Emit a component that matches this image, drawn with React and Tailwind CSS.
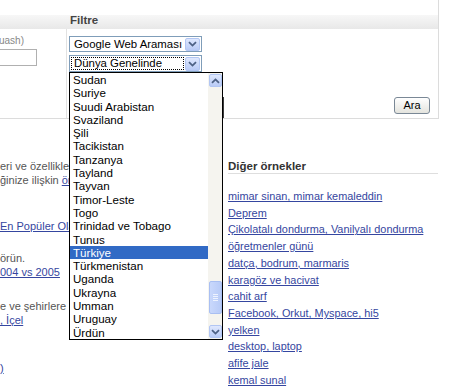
const items = [
  "Sudan",
  "Suriye",
  "Suudi Arabistan",
  "Svaziland",
  "Şili",
  "Tacikistan",
  "Tanzanya",
  "Tayland",
  "Tayvan",
  "Timor-Leste",
  "Togo",
  "Trinidad ve Tobago",
  "Tunus",
  "Türkiye",
  "Türkmenistan",
  "Uganda",
  "Ukrayna",
  "Umman",
  "Uruguay",
  "Ürdün",
];

const links = [
  "mimar sinan, mimar kemaleddin",
  "Deprem",
  "Çikolatalı dondurma, Vanilyalı dondurma",
  "öğretmenler günü",
  "datça, bodrum, marmaris",
  "karagöz ve hacivat",
  "cahit arf",
  "Facebook, Orkut, Myspace, hi5",
  "yelken",
  "desktop, laptop",
  "afife jale",
  "kemal sunal",
];

function Chevron({ down = true }) {
  return (
    <svg width="9" height="6" viewBox="0 0 9 6">
      <path
        d={down ? "M1 1.2 L4.5 4.6 L8 1.2" : "M1 4.8 L4.5 1.4 L8 4.8"}
        fill="none"
        stroke="#4d6185"
        strokeWidth="1.8"
      />
    </svg>
  );
}

function ArrowBtn({ down = true, className = "" }) {
  return (
    <div
      className={
        "flex items-center justify-center rounded-[2px] border border-[#b2c6f3] bg-gradient-to-b from-[#dfe8fe] to-[#b9cbf6] " +
        className
      }
    >
      <Chevron down={down} />
    </div>
  );
}

export default function App() {
  return (
    <div className="relative w-[460px] h-[389px] overflow-hidden bg-white text-[11px] text-[#555] font-['Liberation_Sans',Arial,sans-serif]">
      {/* top panel */}
      <div className="w-[439px] h-[119px] border-r border-b border-[#dcdcdc] flex flex-col">
        <div className="mt-[15px] h-[14px] bg-gradient-to-b from-[#f7f7f7] to-[#e8e8e8] flex items-start">
          <div className="w-[70px]" />
          <span className="font-bold text-[11.5px] leading-[11px] text-[#444]">Filtre</span>
        </div>
        <div className="flex flex-1">
          <div className="w-[67px] border-r border-[#e2e2e2] pt-[6px]">
            <div className="text-[10px] leading-[12px] text-[#888] -ml-[1px]">uash)</div>
            <div className="mt-[2px] w-[37px] h-[17px] border border-[#b0b0b0] border-l-0" />
          </div>
          <div className="flex-1 flex flex-col pl-[2px] pt-[7px] pr-[9px]">
            <div className="w-[133px] h-[16px] border border-[#7f9db9] bg-white flex items-center">
              <span className="flex-1 pl-[4px] text-[11.4px] leading-[14px] text-black">Google Web Araması</span>
              <ArrowBtn className="w-[15px] h-[13px] mr-[1px]" />
            </div>
            <div className="mt-[3px] w-[133px] h-[17px] border border-[#7f9db9] bg-white flex items-center">
              <div className="flex-1 ml-[1px] h-[13px] border border-dotted border-black flex items-center">
                <span className="pl-[2px] text-[11.4px] leading-[13px] text-black">Dünya Genelinde</span>
              </div>
              <ArrowBtn className="w-[15px] h-[14px] mx-[1px]" />
            </div>
            <div className="mt-[25px] flex justify-between items-start">
              <div className="w-[155px] h-[21px] border-r-2 border-[#3c3c3c]" />
              <div className="mr-[-1px] w-[36px] h-[17px] rounded-[3px] border border-[#7a8896] bg-gradient-to-b from-white to-[#e4e4de] flex items-center justify-center text-[11px] text-black">
                Ara
              </div>
            </div>
          </div>
        </div>
      </div>

      {/* lower area */}
      <div className="flex">
        <div className="w-[69px] overflow-hidden whitespace-nowrap text-[11px] leading-[14px] text-[#555]">
          <div className="mt-[40px]">eri ve özellikleri</div>
          <div>
            ğinize ilişkin <a className="text-[#3546a0] underline">örnek</a>
          </div>
          <div className="mt-[32px]">
            <a className="text-[#3546a0] underline"> En Popüler Olanlar</a>
          </div>
          <div className="mt-[18px]">örün.</div>
          <div>
            <a className="text-[#3546a0] underline">004 vs 2005</a>
          </div>
          <div className="mt-[20px]">e ve şehirlere göre</div>
          <div>
            <a className="text-[#3546a0] underline">, İçel</a>
          </div>
          <div className="mt-[34px]">
            <a className="text-[#3546a0] underline">)</a>
          </div>
        </div>
        <div className="ml-[159px] w-[210px]">
          <div className="mt-[40px] font-bold text-[#333] text-[11.5px] leading-[14px] border-b border-[#dedede]">
            Diğer örnekler
          </div>
          <div className="mt-[14px] flex flex-col">
            {links.map((l) => (
              <a key={l} className="text-[#3546a0] underline text-[10.9px] leading-[16.7px] whitespace-nowrap">
                {l}
              </a>
            ))}
          </div>
        </div>
      </div>

      {/* open dropdown list */}
      <div className="absolute left-[69px] top-[72px] w-[154px] h-[268px] border border-black bg-white flex">
        <div className="flex-1 flex flex-col">
          {items.map((it) => (
            <div
              key={it}
              className={
                it === "Türkiye"
                  ? "h-[13.3px] leading-[13.3px] pl-[3px] text-[11.6px] bg-[#316ac5] text-white"
                  : "h-[13.3px] leading-[13.3px] pl-[3px] text-[11.6px] text-black"
              }
            >
              {it}
            </div>
          ))}
        </div>
        <div className="w-[14px] bg-[#f5f4ef] flex flex-col items-center py-[1px]">
          <ArrowBtn down={false} className="w-[13px] h-[13px]" />
          <div className="flex-1 w-full flex flex-col items-center justify-end pb-[11px]">
            <div className="w-[13px] h-[33px] rounded-[2px] border border-[#a9bff2] bg-gradient-to-r from-[#c9d8fc] to-[#b8cbf7] flex flex-col items-center justify-center gap-[1px]">
              <div className="w-[5px] h-[1px] bg-[#eef3ff]" />
              <div className="w-[5px] h-[1px] bg-[#eef3ff]" />
              <div className="w-[5px] h-[1px] bg-[#eef3ff]" />
              <div className="w-[5px] h-[1px] bg-[#eef3ff]" />
            </div>
          </div>
          <ArrowBtn down={true} className="w-[13px] h-[13px]" />
        </div>
      </div>
    </div>
  );
}
